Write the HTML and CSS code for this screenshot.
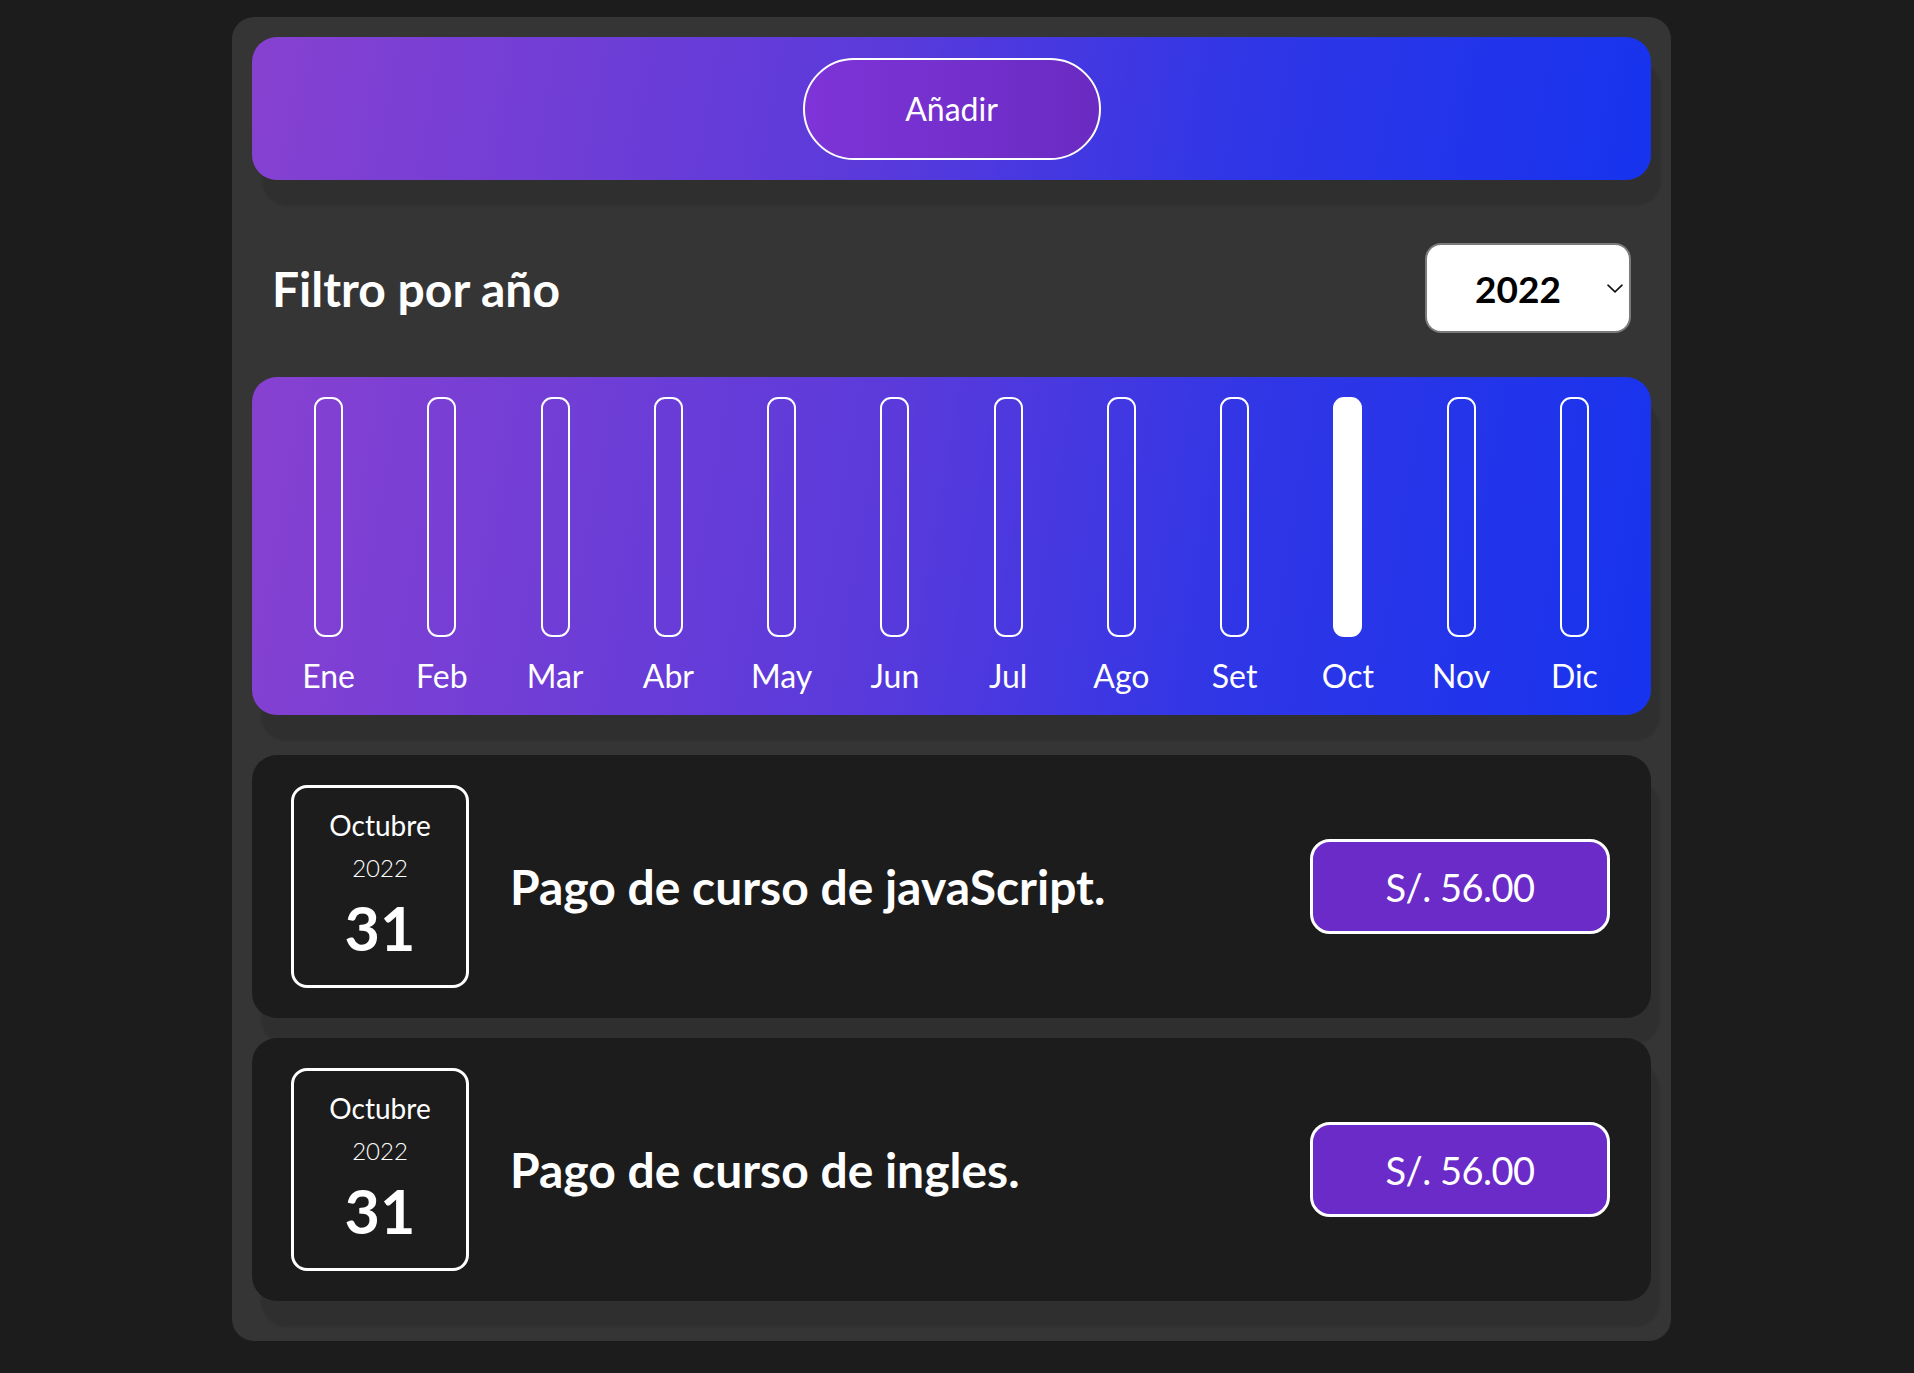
FILE: index.html
```html
<!DOCTYPE html>
<html lang="es">
<head>
<meta charset="utf-8">
<title>Gastos</title>
<link rel="stylesheet" href="styles.css">
</head>
<body>
<div class="app">
  <header class="top-bar">
    <button class="add-btn">Añadir</button>
  </header>

  <section class="filter">
    <h2 class="filter-title">Filtro por año</h2>
    <div class="select-wrap">
      <select class="year-select">
        <option>2022</option>
        <option>2021</option>
        <option>2020</option>
      </select>
      <svg class="chevron" width="16" height="9" viewBox="0 0 16 9" fill="none">
        <path d="M1 1.2 L8 7.8 L15 1.2" stroke="#111" stroke-width="1.6" stroke-linecap="round" stroke-linejoin="round"/>
      </svg>
    </div>
  </section>

  <section class="chart">
    <div class="month"><div class="bar"></div><span class="label">Ene</span></div>
    <div class="month"><div class="bar"></div><span class="label">Feb</span></div>
    <div class="month"><div class="bar"></div><span class="label">Mar</span></div>
    <div class="month"><div class="bar"></div><span class="label">Abr</span></div>
    <div class="month"><div class="bar"></div><span class="label">May</span></div>
    <div class="month"><div class="bar"></div><span class="label">Jun</span></div>
    <div class="month"><div class="bar"></div><span class="label">Jul</span></div>
    <div class="month"><div class="bar"></div><span class="label">Ago</span></div>
    <div class="month"><div class="bar"></div><span class="label">Set</span></div>
    <div class="month"><div class="bar bar-full"></div><span class="label">Oct</span></div>
    <div class="month"><div class="bar"></div><span class="label">Nov</span></div>
    <div class="month"><div class="bar"></div><span class="label">Dic</span></div>
  </section>

  <ul class="list">
    <li class="item">
      <div class="date">
        <span class="date-month">Octubre</span>
        <span class="date-year">2022</span>
        <span class="date-day">31</span>
      </div>
      <h3 class="item-title">Pago de curso de javaScript.</h3>
      <div class="price">S/. 56.00</div>
    </li>
    <li class="item">
      <div class="date">
        <span class="date-month">Octubre</span>
        <span class="date-year">2022</span>
        <span class="date-day">31</span>
      </div>
      <h3 class="item-title">Pago de curso de ingles.</h3>
      <div class="price">S/. 56.00</div>
    </li>
  </ul>
</div>
</body>
</html>
```

FILE: styles.css
```css
* {
  box-sizing: border-box;
}

html, body {
  margin: 0;
  padding: 0;
  background: #1c1c1c;
  font-family: Lato, "Noto Sans", sans-serif;
  color: #ffffff;
}

body {
  padding: 17px 0 0 232px;
  min-height: 1373px;
}

.app {
  width: 1439px;
  background: #353535;
  border-radius: 22px;
  padding: 20px 20px 40px 20px;
}

/* Top bar */
.top-bar {
  height: 143px;
  border-radius: 25px;
  background: linear-gradient(100deg, #8741d1 0%, #5a3adb 45%, #3036e6 70%, #1733ee 100%);
  display: flex;
  align-items: center;
  justify-content: center;
  box-shadow: 10px 26px 2px rgba(0, 0, 0, 0.1);
}

.add-btn {
  width: 298px;
  height: 102px;
  border: 2px solid #ffffff;
  border-radius: 51px;
  background: linear-gradient(90deg, #7e34d8 0%, #6a2bc2 100%);
  color: #ffffff;
  font-family: Lato, sans-serif;
  font-size: 32px;
  font-weight: 400;
  cursor: pointer;
}

/* Filter row */
.filter {
  display: flex;
  align-items: center;
  justify-content: space-between;
  margin: 63px 0 44px 0;
  padding: 0 20px 0 20px;
}

.filter-title {
  margin: 0;
  font-size: 48px;
  font-weight: 700;
}

.select-wrap {
  position: relative;
  width: 206px;
  height: 90px;
}

.year-select {
  appearance: none;
  -webkit-appearance: none;
  width: 100%;
  height: 100%;
  border: 2px solid #7a7a7a;
  border-radius: 16px;
  background: #ffffff;
  color: #000000;
  font-family: Lato, sans-serif;
  font-size: 37px;
  font-weight: 700;
  padding: 0 0 0 48px;
  outline: none;
}

.chevron {
  position: absolute;
  right: 8px;
  top: 41px;
  pointer-events: none;
}

/* Chart */
.chart {
  display: grid;
  grid-template-columns: repeat(12, 1fr);
  padding: 20px 20px 20px 20px;
  border-radius: 25px;
  background: linear-gradient(100deg, #8741d1 0%, #5a3adb 45%, #3036e6 70%, #1733ee 100%);
  box-shadow: 9px 26px 2px rgba(0, 0, 0, 0.1);
  margin-bottom: 40px;
}

.month {
  display: flex;
  flex-direction: column;
  align-items: center;
}

.bar {
  width: 29px;
  height: 240px;
  border: 2px solid #ffffff;
  border-radius: 11px;
}

.bar-full {
  background: #ffffff;
}

.label {
  margin-top: 20px;
  font-size: 32px;
  line-height: 38px;
  font-weight: 400;
}

/* List */
.list {
  list-style: none;
  margin: 0;
  padding: 0;
  display: flex;
  flex-direction: column;
  gap: 20px;
}

.item {
  height: 263px;
  background: #1c1c1c;
  border-radius: 25px;
  display: flex;
  align-items: center;
  padding: 0 41px 0 39px;
  box-shadow: 9px 26px 2px rgba(0, 0, 0, 0.1);
}

.date {
  width: 178px;
  height: 203px;
  border: 3px solid #ffffff;
  border-radius: 16px;
  display: flex;
  flex-direction: column;
  align-items: center;
  padding-top: 20px;
}

.date-month {
  font-size: 28px;
  line-height: 34px;
  font-weight: 400;
}

.date-year {
  margin-top: 11px;
  font-size: 24px;
  line-height: 29px;
  font-weight: 300;
}

.date-day {
  margin-top: 10px;
  font-size: 61px;
  line-height: 72px;
  font-weight: 700;
}

.item-title {
  flex: 1;
  margin: 0 0 0 41px;
  font-size: 48px;
  font-weight: 700;
}

.price {
  width: 300px;
  height: 95px;
  border: 3px solid #ffffff;
  border-radius: 20px;
  background: #6b2bc8;
  display: flex;
  align-items: center;
  justify-content: center;
  font-size: 38px;
  letter-spacing: -0.5px;
  font-weight: 400;
}
```
